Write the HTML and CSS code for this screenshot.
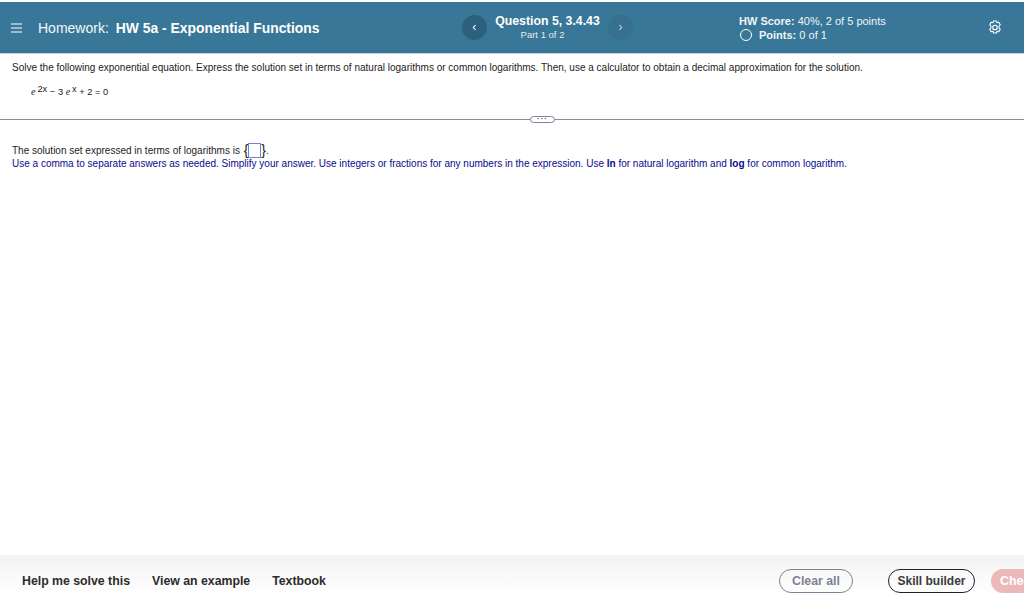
FILE: index.html
```html
<!DOCTYPE html>
<html lang="en">
<head>
<meta charset="utf-8">
<title>Homework: HW 5a - Exponential Functions</title>
<link rel="stylesheet" href="styles.css">
</head>
<body>
<div class="page">
  <header class="header">
    <div class="title-area">
      <svg class="menu" width="11" height="10" viewBox="0 0 11 10"><path d="M0 1h11M0 5h11M0 9h11" stroke="#fff" stroke-width="1.2" fill="none"/></svg>
      <div class="title"><span class="title-label">Homework:</span><b class="title-name">HW 5a - Exponential Functions</b></div>
    </div>
    <div class="nav">
      <div class="nav-btn prev"><svg width="5" height="7" viewBox="0 0 5 7"><path d="M3.6 1L1.3 3.5l2.3 2.5" stroke="#fff" stroke-width="1.1" fill="none"/></svg></div>
      <div class="question">
        <div class="q-title">Question 5, 3.4.43</div>
        <div class="q-part">Part 1 of 2</div>
      </div>
      <div class="nav-btn next"><svg width="5" height="7" viewBox="0 0 5 7"><path d="M1.4 1l2.3 2.5L1.4 6" stroke="#c4d5df" stroke-width="1.1" fill="none"/></svg></div>
    </div>
    <div class="score">
      <div class="score-row"><b>HW Score:</b> 40%, 2 of 5 points</div>
      <div class="points-row"><span class="ring"></span><span><b>Points:</b> 0 of 1</span></div>
    </div>
    <svg class="gear" width="14" height="15" viewBox="0 0 14 15"><path d="M5.500 1h3l.5 1.700 1.800-.5 1.500 2.500-1.200 1.300v2l1.200 1.300-1.500 2.500-1.800-.5-.5 1.700h-3l-.5-1.700-1.800.5-1.500-2.500 1.200-1.300v-2L1.700 4.700l1.500-2.500 1.800.5z" fill="none" stroke="#fff" stroke-width="1.100" stroke-linejoin="round"/><circle cx="7" cy="7.500" r="2.300" fill="none" stroke="#fff" stroke-width="1.100"/></svg>
  </header>
  <main class="main">
    <section class="question-text">
      <p class="prompt">Solve the following exponential equation. Express the solution set in terms of natural logarithms or common logarithms. Then, use a calculator to obtain a decimal approximation for the solution.</p>
      <p class="equation"><i class="e">e</i><sup class="exp">2x</sup> − 3 <i class="e">e</i><sup class="exp">x</sup> + 2 = 0</p>
    </section>
    <div class="divider"><span class="handle">···</span></div>
    <section class="answer">
      <p class="answer-line">The solution set expressed in terms of logarithms is <span class="brace open">{</span><span class="box"></span><span class="brace">}</span>.</p>
      <p class="hint">Use a comma to separate answers as needed. Simplify your answer. Use integers or fractions for any numbers in the expression. Use <b>ln</b> for natural logarithm and <b>log</b> for common logarithm.</p>
    </section>
  </main>
  <footer class="footer">
    <div class="links">
      <span>Help me solve this</span>
      <span>View an example</span>
      <span>Textbook</span>
    </div>
    <div class="actions">
      <span class="btn clear">Clear all</span>
      <span class="btn skill">Skill builder</span>
      <span class="btn check">Check answer</span>
    </div>
  </footer>
</div>
</body>
</html>
```
FILE: styles.css
```css
* { box-sizing: border-box; }
html, body { margin: 0; height: 100%; overflow: hidden; background: #fff; }
body { font-family: "Liberation Sans", Arial, sans-serif; color: #222; }
p { margin: 0; }
.page { width: 1024px; height: 606px; display: flex; flex-direction: column; padding-top: 2px; overflow: hidden; }
.header { height: 52px; flex: none; background: #387797; border-bottom: 1px solid #c3d4df; color: #fff; display: flex; align-items: center; position: relative; }
.title-area { width: 462px; flex: none; display: flex; align-items: center; padding-left: 11px; gap: 16px; }
.title { font-size: 14px; white-space: nowrap; display: flex; gap: 7px; }
.title-label { color: #f4f7f9; }
.title-name { font-size: 13.9px; }
.nav { width: 277px; flex: none; display: flex; align-items: center; }
.nav-btn { width: 25px; height: 25px; border-radius: 50%; display: flex; align-items: center; justify-content: center; flex: none; }
.prev { background: #2d607d; }
.next { background: #376f8e; }
.question { width: 121px; text-align: center; }
.q-title { font-size: 12.3px; font-weight: 700; line-height: 14px; white-space: nowrap; }
.q-part { font-size: 9.5px; line-height: 13px; color: #e2ebf0; padding-right: 10px; }
.score { font-size: 11px; line-height: 14px; width: 249px; flex: none; color: #f0f4f7; }
.points-row { display: flex; align-items: center; gap: 7px; margin-left: 1px; }
.ring { width: 12px; height: 12px; border: 1.5px solid #fff; border-radius: 50%; }
.gear { flex: none; }
.main { flex: 1; min-height: 0; }
.question-text { height: 65px; padding: 8px 12px 0; }
.prompt { font-size: 10px; line-height: 12px; color: #222; white-space: nowrap; }
.equation { font-size: 9.3px; line-height: 12px; margin: 12px 0 0 19px; color: #222; }
.e { font-family: "Liberation Serif", serif; font-size: 10px; }
.exp { font-size: 9.300px; line-height: 0; vertical-align: 3px; margin-left: 2px; }
.divider { height: 1px; background: #878ca2; position: relative; display: flex; justify-content: center; }
.handle { position: absolute; left: 530px; top: -3px; width: 25px; height: 7px; background: #fff; border: 1px solid #7c8197; border-radius: 4px; font-size: 8px; line-height: 4px; text-align: center; color: #444; font-weight: 700; letter-spacing: 1px; }
.answer { padding: 23px 12px 0; }
.answer-line { font-size: 10px; line-height: 15px; color: #222; display: flex; align-items: center; white-space: pre; }
.brace { font-size: 14px; line-height: 15px; font-weight: 400; }
.open { margin-left: 1px; margin-right: 0; }
.box { width: 13px; height: 15px; border: 1px solid #6b84d6; background: #fff; }
.hint { font-size: 10px; line-height: 12px; color: #0a0a8c; white-space: nowrap; }
.footer { height: 51px; flex: none; background: linear-gradient(#f3f3f3, #ffffff 80%); display: flex; align-items: center; justify-content: space-between; padding: 0 0 0 22px; font-size: 12.3px; font-weight: 700; color: #2b2b2b; overflow: hidden; }
.links { display: flex; gap: 22px; white-space: nowrap; }
.actions { display: flex; gap: 16px; align-items: center; width: 245px; flex: none; white-space: nowrap; }
.btn { height: 24px; border-radius: 12px; display: flex; align-items: center; justify-content: center; flex: none; }
.clear { width: 74px; border: 1px solid #7c8197; color: #7c8197; margin-right: 19px; }
.skill { width: 87px; border: 1px solid #1f2333; color: #3a3a3a; font-size: 12px; }
.check { width: 100px; background: #ecb9bb; color: #fff; padding: 0 0 0 9px; justify-content: flex-start; }
```
